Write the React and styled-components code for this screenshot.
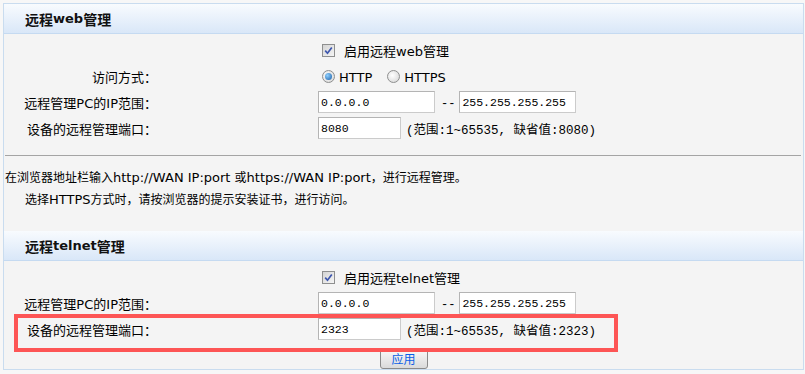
import React from 'react'
import styled, { createGlobalStyle } from 'styled-components'

const cjk = '"Noto Sans CJK SC", sans-serif'
const mono = '"Liberation Mono", "Noto Sans CJK SC", monospace'

const GlobalStyle = createGlobalStyle`
    html, body {
        margin: 0;
        padding: 0;
        background: #f7f7f7;
    }
    body {
        font-family: ${cjk};
        font-size: 13px;
        color: #000;
    }
`

const Panel = styled.div`
    box-sizing: border-box;
    width: 801px;
    height: 367px;
    margin: 3px 0 0 3px;
    border: 1px solid #c9dcef;
    background: #f4f4f4;
`
const SectionHeader = styled.div`
    height: 29px;
    margin-top: ${p => p.$gap || 0}px;
    padding-left: 21px;
    display: flex;
    align-items: center;
    border-bottom: 1px solid #c5daf1;
    background: linear-gradient(#f8fbfe, #d9e7f8);
    font-size: 14px;
    font-weight: bold;
    color: #111;
`
const Latin = styled.span`
    font-family: "DejaVu Sans", sans-serif;
    font-size: 13px;
`
const Rows = styled.div`
    padding-top: 3px;
`
const Row = styled.div`
    position: relative;
    display: grid;
    grid-template-columns: 153px auto;
    column-gap: 161px;
    align-items: center;
    height: 26px;
`
const Label = styled.div`
    text-align: right;
    white-space: nowrap;
`
const Control = styled.div`
    display: flex;
    align-items: center;
    white-space: nowrap;
`
const CheckBox = styled.span`
    box-sizing: border-box;
    width: 13px;
    height: 13px;
    margin-left: 4px;
    display: inline-flex;
    align-items: center;
    justify-content: center;
    border: 1px solid #8e8f8f;
    background: linear-gradient(135deg, #d4d4d4, #f5f5f5);
`
const Radio = styled.span`
    box-sizing: border-box;
    width: 13px;
    height: 13px;
    margin-left: ${p => p.$first ? 4 : 15}px;
    display: inline-flex;
    align-items: center;
    justify-content: center;
    border: 1px solid #8e8f8f;
    border-radius: 50%;
    background: radial-gradient(circle at 40% 40%, #ffffff, #d2d2d2);
    &::after {
        content: '';
        display: ${p => p.$checked ? 'block' : 'none'};
        width: 7px;
        height: 7px;
        border-radius: 50%;
        background: radial-gradient(circle at 35% 35%, #8fd0ff, #1a5da6);
    }
`
const OptionText = styled.span`
    margin-left: ${p => p.$gap || 4}px;
`
const TextInput = styled.input`
    box-sizing: border-box;
    width: ${p => p.$width}px;
    height: 22px;
    margin: 0;
    padding: 0 2px;
    border: 1px solid #cbcbcb;
    border-top-color: #b4b4b4;
    border-left-color: #b4b4b4;
    background: #fff;
    font-family: ${mono};
    font-size: 11.5px;
    color: #000;
    outline: none;
`
const Dash = styled.span`
    margin: 0 4px 0 6px;
    font-family: ${mono};
    font-size: 12px;
    padding-top: 3px;
`
const Hint = styled.span`
    margin-left: 5px;
    font-family: ${mono};
    font-size: 12.5px;
`
const Divider = styled.div`
    height: 1px;
    margin: 14px 2px 0 1px;
    background: #a4a4a4;
`
const Notes = styled.div`
    padding: 10px 0 0 1px;
    font-size: 12px;
    line-height: 21px;
`
const NoteLine = styled.div`
    padding-left: ${p => p.$indent || 0}px;
    white-space: nowrap;
`
const ButtonRow = styled.div`
    display: flex;
    justify-content: center;
    margin-top: 6px;
`
const ApplyButton = styled.button`
    box-sizing: border-box;
    width: 48px;
    height: 21px;
    padding: 0;
    border: 1px solid #8a8a8a;
    border-radius: 3px;
    background: linear-gradient(#fbfbfb, #dadada);
    color: #0a5fe6;
    font-family: ${cjk};
    font-size: 12px;
`
const Highlight = styled.div`
    position: absolute;
    left: 10px;
    top: -2px;
    width: 604px;
    height: 38px;
    box-sizing: border-box;
    border: 4px solid #fd5555;
    pointer-events: none;
`

function Check() {
    return (
        <svg width="9" height="9" viewBox="0 0 9 9">
            <path d="M1.2 4.6 L3.5 7.2 L7.8 1.4" fill="none" stroke="#3d56ad" strokeWidth="1.7" />
        </svg>
    )
}

function EnableRow({ children }) {
    return (
        <Row>
            <Label />
            <Control>
                <CheckBox><Check /></CheckBox>
                <OptionText $gap={9}>{children}</OptionText>
            </Control>
        </Row>
    )
}

function IpRangeRow() {
    return (
        <Row>
            <Label>远程管理<Latin>PC</Latin>的<Latin>IP</Latin>范围：</Label>
            <Control>
                <TextInput $width={117} defaultValue="0.0.0.0" />
                <Dash>--</Dash>
                <TextInput $width={117} defaultValue="255.255.255.255" />
            </Control>
        </Row>
    )
}

function PortRow({ port, highlighted }) {
    return (
        <Row>
            <Label>设备的远程管理端口：</Label>
            <Control>
                <TextInput $width={83} defaultValue={port} />
                <Hint>(范围:1~65535, 缺省值:{port})</Hint>
            </Control>
            {highlighted && <Highlight />}
        </Row>
    )
}

export default function App() {
    return (
        <>
            <GlobalStyle />
            <Panel>
                <SectionHeader>远程<Latin>web</Latin>管理</SectionHeader>
                <Rows>
                    <EnableRow>启用远程<Latin>web</Latin>管理</EnableRow>
                    <Row>
                        <Label>访问方式：</Label>
                        <Control>
                            <Radio $first $checked />
                            <OptionText><Latin>HTTP</Latin></OptionText>
                            <Radio />
                            <OptionText><Latin>HTTPS</Latin></OptionText>
                        </Control>
                    </Row>
                    <IpRangeRow />
                    <PortRow port="8080" />
                </Rows>
                <Divider />
                <Notes>
                    <NoteLine>在浏览器地址栏输入<Latin>http://WAN IP:port </Latin>或<Latin>https://WAN IP:port</Latin>，进行远程管理。</NoteLine>
                    <NoteLine $indent={20}>选择<Latin>HTTPS</Latin>方式时，请按浏览器的提示安装证书，进行访问。</NoteLine>
                </Notes>
                <SectionHeader $gap={21}>远程<Latin>telnet</Latin>管理</SectionHeader>
                <Rows>
                    <EnableRow>启用远程<Latin>telnet</Latin>管理</EnableRow>
                    <IpRangeRow />
                    <PortRow port="2323" highlighted />
                </Rows>
                <ButtonRow>
                    <ApplyButton>应用</ApplyButton>
                </ButtonRow>
            </Panel>
        </>
    )
}
